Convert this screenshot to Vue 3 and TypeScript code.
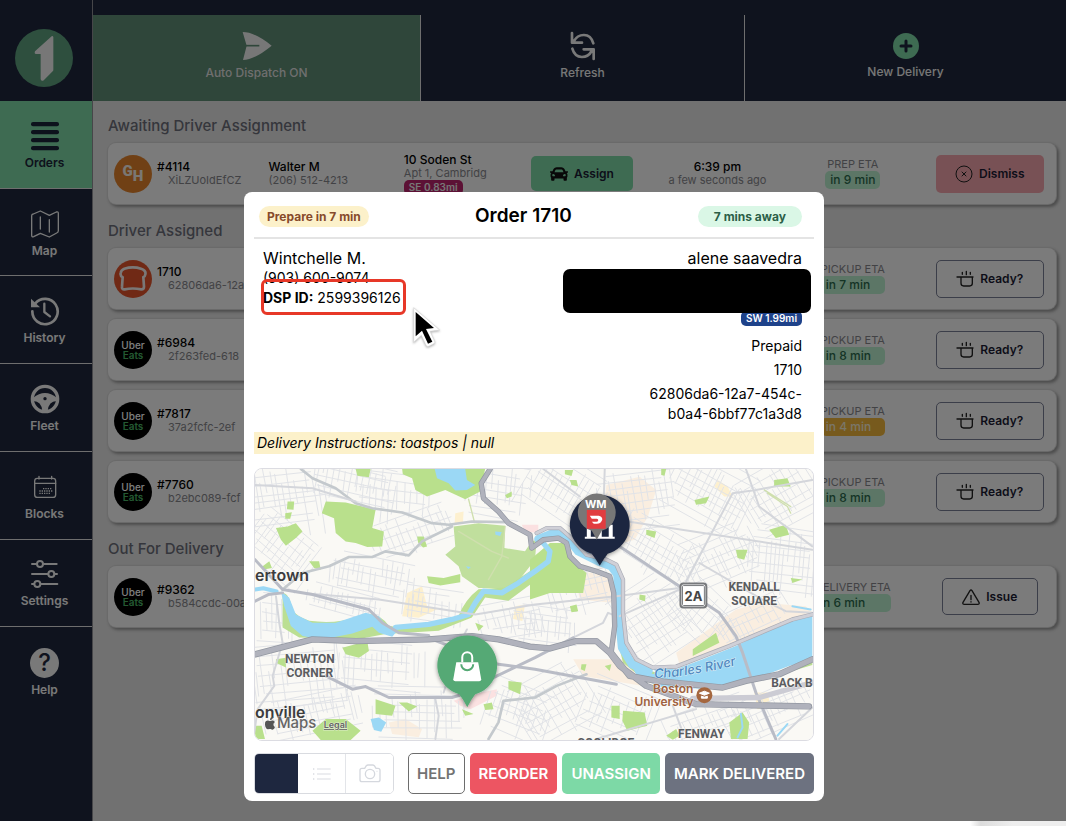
<script setup lang="ts">
interface Order {
  logo: 'gh' | 'toast' | 'uber'
  ref: string
  code: string
  customer?: string
  phone?: string
  street?: string
  unit?: string
  distance?: string
  time?: string
  ago?: string
  etaLabel: string
  eta: string
  late?: boolean
  action: 'dismiss' | 'ready' | 'issue'
}
interface Section {
  title: string
  orders: Order[]
}

const navItems: string[] = ['Orders', 'Map', 'History', 'Fleet', 'Blocks', 'Settings', 'Help']

const sections: Section[] = [
  {
    title: 'Awaiting Driver Assignment',
    orders: [
      {
        logo: 'gh', ref: '#4114', code: 'XiLZUoIdEfCZ', customer: 'Walter M', phone: '(206) 512-4213',
        street: '10 Soden St', unit: 'Apt 1, Cambridg', distance: 'SE 0.83mi',
        time: '6:39 pm', ago: 'a few seconds ago', etaLabel: 'PREP ETA', eta: 'in 9 min', action: 'dismiss',
      },
    ],
  },
  {
    title: 'Driver Assigned',
    orders: [
      { logo: 'toast', ref: '1710', code: '62806da6-12a', etaLabel: 'PICKUP ETA', eta: 'in 7 min', action: 'ready' },
      { logo: 'uber', ref: '#6984', code: '2f263fed-618', etaLabel: 'PICKUP ETA', eta: 'in 8 min', action: 'ready' },
      { logo: 'uber', ref: '#7817', code: '37a2fcfc-2ef', etaLabel: 'PICKUP ETA', eta: 'in 4 min', late: true, action: 'ready' },
      { logo: 'uber', ref: '#7760', code: 'b2ebc089-fcf', etaLabel: 'PICKUP ETA', eta: 'in 8 min', action: 'ready' },
    ],
  },
  {
    title: 'Out For Delivery',
    orders: [
      { logo: 'uber', ref: '#9362', code: 'b584ccdc-00a', etaLabel: 'DELIVERY ETA', eta: 'in 6 min', action: 'issue' },
    ],
  },
]

// Residential street grids: [centre x, centre y, width, height, angle]
type Patch = [number, number, number, number, number]
const patches: Patch[] = [
  [110, 110, 260, 200, -8], [330, 70, 260, 130, 12], [110, 270, 220, 160, 38], [440, 110, 220, 140, 6],
  [500, 220, 260, 120, -20], [380, 350, 260, 120, 10], [760, 90, 200, 160, 8], [300, 430, 240, 80, 14],
  [80, 480, 120, 160, 2], [160, 650, 280, 200, -6], [400, 620, 280, 150, 4], [520, 760, 280, 160, 0],
  [200, 770, 300, 130, -12], [800, 480, 200, 120, -12], [820, 760, 200, 170, 20], [560, 440, 180, 110, 8],
  [960, 90, 240, 180, 32], [1180, 110, 240, 200, -8], [1400, 90, 260, 200, 28], [1610, 110, 240, 200, -30],
  [1240, 280, 260, 160, 30], [1420, 300, 260, 180, -24], [1620, 300, 220, 200, 6], [1230, 480, 220, 240, -34],
  [1370, 460, 200, 160, 40], [1010, 400, 200, 130, -14], [900, 500, 200, 120, 6], [930, 730, 240, 200, -30],
  [1120, 760, 220, 170, 22], [1390, 790, 260, 110, -20], [1580, 770, 280, 150, -24], [1530, 480, 220, 110, -26],
]

let seed = 17
function rand(): number {
  seed = (seed * 16807) % 2147483647
  return seed / 2147483647
}

function streetPath([cx, cy, w, h, deg]: Patch): string {
  const a = (deg * Math.PI) / 180
  const at = (x: number, y: number): string =>
    `${Math.round(cx + x * Math.cos(a) - y * Math.sin(a))} ${Math.round(cy + x * Math.sin(a) + y * Math.cos(a))}`
  let d = ''
  for (let y = -h / 2; y <= h / 2; y += 18 + rand() * 16) {
    const from = -w / 2 + rand() * 40
    d += `M${at(from, y)}L${at(w / 2 - rand() * 50, y + rand() * 8)}`
  }
  for (let x = -w / 2; x <= w / 2; x += 12 + rand() * 12) {
    const from = -h / 2 + rand() * h * 0.4
    d += `M${at(x, from)}L${at(x + rand() * 6, from + h * (0.35 + rand() * 0.4))}`
  }
  return d
}
const streets: string = patches.map(streetPath).join('')
</script>

<template>
  <div class="app">
    <div class="shell">
      <aside class="side">
        <div class="brand">
          <svg width="58" height="58" viewBox="47 87 174 174" aria-hidden="true">
            <circle cx="134" cy="174" r="87" fill="#5c9f7d" />
            <path d="M157 109 107 154q-3 8 3 8h14v76q3 8 10 2l26-26q2-2 2-5V111q-2-4-5-2z" fill="#efefef" />
          </svg>
        </div>
        <nav class="nav">
          <a v-for="item in navItems" :key="item" href="#" class="nav-item" :class="{ active: item === 'Orders' }">
            <svg v-if="item === 'Orders'" width="30" height="30" viewBox="89 363 90 90" fill="#1b2438">
              <rect x="92" y="366" width="84" height="13" rx="6" /><rect x="92" y="390" width="84" height="13" rx="6" />
              <rect x="92" y="414" width="84" height="13" rx="6" /><rect x="92" y="438" width="84" height="13" rx="6" />
            </svg>
            <svg v-else-if="item === 'Map'" width="30" height="30" viewBox="89 625 90 90" class="line" stroke-width="4">
              <path d="M94 645q0-4 5-5l21-9 27 13 21-10q6-2 6 4v52q0 5-5 7l-22 12-27-11-20 10q-6 2-6-4zM120 649v36M147 657v37" />
            </svg>
            <svg v-else-if="item === 'History'" width="30" height="30" viewBox="89 287 90 90" class="line" stroke-width="8">
              <path d="M105 309A38 38 0 1 1 96 333" /><path d="M132 310v25l17 13" stroke-width="7" />
              <path d="M92 295v26h27z" fill="#f2f2f2" stroke="none" />
            </svg>
            <svg v-else-if="item === 'Fleet'" width="30" height="30" viewBox="89 550 90 90" class="line" stroke-width="10">
              <circle cx="134" cy="595" r="38" />
              <path d="M98 592q36-30 72 0l-1 9q-24 0-27 30h-16q-3-30-27-30z" fill="#f2f2f2" stroke="none" />
              <circle cx="134" cy="594" r="5" fill="#1e273c" stroke="none" />
            </svg>
            <svg v-else-if="item === 'Blocks'" width="30" height="30" viewBox="90 815 90 90" class="line" stroke-width="4">
              <rect x="104" y="834" width="63" height="57" rx="8" /><path d="M104 849h63M117 828v8M155 828v8" />
              <path d="M129 865h28M118 872h39M118 879h32" stroke-dasharray="4 3" stroke-width="4" stroke-linecap="butt" />
            </svg>
            <svg v-else-if="item === 'Settings'" width="30" height="30" viewBox="89 296 90 90" class="line" stroke-width="6">
              <path d="M95 311h15M128 311h41M95 341h48M163 341h7M121 371h50M95 371h6" />
              <circle cx="119" cy="311" r="9" /><circle cx="153" cy="341" r="9" /><circle cx="111" cy="371" r="9" />
            </svg>
            <span v-else class="question" aria-hidden="true">?</span>
            <span>{{ item }}</span>
          </a>
        </nav>
      </aside>

      <div class="content">
        <header class="topbar">
          <button type="button" class="top on">
            <svg width="32" height="30" viewBox="721 93 96 90">
              <path d="M726 96q36 0 87 41-51 42-86 43l11-43z" fill="#efefef" />
              <path d="M736 137h40" stroke="#5e8c74" stroke-width="5" />
            </svg>
            <span>Auto Dispatch ON</span>
          </button>
          <button type="button" class="top">
            <svg width="30" height="30" viewBox="622 93 90 90" class="line" stroke-width="8">
              <path d="M634 99v29h30M640 123c12-22 48-28 58 7M699 177v-29h-30M693 153c-12 22-48 28-58-7" />
            </svg>
            <span>Refresh</span>
          </button>
          <button type="button" class="top">
            <svg width="28" height="28" viewBox="0 0 28 28">
              <circle cx="14" cy="14" r="13" fill="#7cd6a4" /><path d="M14 9v10M9 14h10" stroke="#1e273c" stroke-width="3" stroke-linecap="round" />
            </svg>
            <span>New Delivery</span>
          </button>
        </header>

        <main class="board">
          <section v-for="section in sections" :key="section.title">
            <h2>{{ section.title }}</h2>
            <div class="cards">
              <article v-for="order in section.orders" :key="order.ref" class="card">
                <div class="ident">
                  <span class="logo" :class="order.logo">
                    <template v-if="order.logo === 'uber'"><span>Uber</span><b>Eats</b></template>
                    <template v-else-if="order.logo === 'gh'"><b class="g">G</b><b class="h">H</b></template>
                    <svg v-else width="28" height="26" viewBox="0 0 84 78">
                      <path d="M16 8Q42 0 66 8q16 5 13 17-1 7-6 9l2 28q0 8-8 8-26-5-50 0-9 1-8-8l2-28Q3 30 5 21q1-9 11-13z" fill="none" stroke="#f4f0ee" stroke-width="8" />
                    </svg>
                  </span>
                  <div class="pair"><strong>{{ order.ref }}</strong><small class="code">{{ order.code }}</small></div>
                </div>
                <div class="pair inset"><strong>{{ order.customer }}</strong><small>{{ order.phone }}</small></div>
                <div class="pair inset">
                  <strong>{{ order.street }}</strong><small>{{ order.unit }}</small>
                  <span v-if="order.distance" class="dist">{{ order.distance }}</span>
                </div>
                <div class="cell">
                  <button v-if="order.action === 'dismiss'" type="button" class="assign">
                    <svg width="18" height="18" viewBox="0 0 512 512" fill="#111"><path d="M500 176h-60l-17-42C406 92 366 64 320 64H193c-47 0-87 28-104 70l-17 42H12c-8 0-14 7-12 15l6 24c2 5 7 9 12 9h20c-13 12-22 29-22 48v48c0 16 6 31 16 42v54c0 18 14 32 32 32h32c18 0 32-14 32-32v-32h256v32c0 18 14 32 32 32h32c18 0 32-14 32-32v-54c10-11 16-26 16-42v-48c0-19-9-36-22-48h20c5 0 10-4 12-9l6-24c2-8-4-15-12-15zM148 158c7-18 25-30 45-30h127c19 0 37 12 44 30l20 50H128zM96 320c-19 0-32-13-32-32s13-32 32-32 48 29 48 48-29 16-48 16zm320 0c-19 0-48 3-48-16s29-48 48-48 32 13 32 32-13 32-32 32z" /></svg>
                    Assign
                  </button>
                </div>
                <div class="pair center"><strong>{{ order.time }}</strong><small>{{ order.ago }}</small></div>
                <div class="cell">
                  <div class="eta"><small>{{ order.etaLabel }}</small><span :class="{ late: order.late }">{{ order.eta }}</span></div>
                </div>
                <div class="cell last">
                  <button type="button" class="act" :class="order.action">
                    <svg v-if="order.action === 'dismiss'" width="18" height="18" viewBox="0 0 54 54" fill="none" stroke="#222" stroke-width="3">
                      <circle cx="27" cy="27" r="24" /><path d="m21 21 12 12M33 21 21 33" stroke-linecap="round" />
                    </svg>
                    <svg v-else-if="order.action === 'ready'" width="18" height="18" viewBox="441 120 54 54" fill="none" stroke="#222" stroke-width="4" stroke-linecap="round">
                      <path d="M444 141h48M456 142v18q0 8 8 8h18q8 0 8-8v-18M460 127v6M472 124v10M484 127v6" />
                    </svg>
                    <svg v-else width="18" height="18" viewBox="0 0 54 54" fill="none" stroke="#222" stroke-width="4" stroke-linecap="round" stroke-linejoin="round">
                      <path d="M24 8q3-4 6 0l21 35q2 6-4 6H7q-6 0-4-6zM27 22v13M27 41v1" />
                    </svg>
                    {{ order.action === 'dismiss' ? 'Dismiss' : order.action === 'ready' ? 'Ready?' : 'Issue' }}
                  </button>
                </div>
              </article>
            </div>
          </section>
        </main>
      </div>

      <div class="overlay">
        <div class="modal" role="dialog" aria-modal="true" aria-labelledby="order-title">
          <div class="m-head">
            <div><span class="pill amber">Prepare in 7 min</span></div>
            <h1 id="order-title">Order 1710</h1>
            <div class="end"><span class="pill mint">7 mins away</span></div>
          </div>

          <div class="m-body">
            <div class="left">
              <p class="name">Wintchelle M.</p>
              <p>(903) 600-9074</p>
              <p class="dsp"><b>DSP ID:</b> 2599396126</p>
              <svg class="cursor" width="30" height="44" viewBox="0 0 90 132" aria-hidden="true">
                <path d="M8 5v104l23-21 14 30q3 5 8 3l16-8q4-3 2-7L57 76l29-4z" fill="#fff" stroke="#d5d5d5" stroke-width="2" />
                <path d="M14 18v73l19-17 18 39 13-6-19-38 24-3z" fill="#000" />
              </svg>
            </div>
            <div class="right">
              <p class="name">alene saavedra</p>
              <div class="redacted"></div>
              <span class="dist blue">SW 1.99mi</span>
              <p class="first">Prepaid</p>
              <p>1710</p>
              <p class="uuid">62806da6-12a7-454c-b0a4-6bbf77c1a3d8</p>
            </div>
          </div>

          <p class="notes">Delivery Instructions: toastpos | null</p>

          <div class="map">
            <svg viewBox="0 0 560 272" role="img" aria-label="Map of pickup and drop-off">
              <defs>
                <filter id="pin-shadow" x="-30%" y="-30%" width="160%" height="160%">
                  <feDropShadow dx="0" dy="1" stdDeviation="2" flood-opacity=".45" />
                </filter>
              </defs>
              <rect width="560" height="272" fill="#faf9f5" />
              <g transform="scale(.33333) translate(-27 -27)" fill="none" stroke-linejoin="round" stroke-linecap="round">
                <g fill="#faeee0">
                  <path d="M1085 75l100-25 50 40-25 80-40 70-55 15-45-60zM985 330l110 20 5 80-95-10zM1295 580l180-130 80-20 130 10 20 20-250 95-150 60zM985 600l200 0 10 80-180-30zM430 790l50-10 50 30-10 25-80-10z" />
                  <path d="M485 400l45-20 15 60 30 10-55 25-50-5zM810 440l30-5-8 50-28-6zM1420 60l30 20 15 30-25 0-30-30zM1530 700l40 0 10 45-40 5zM630 160l25-5-2 35-25 0z" fill="#fdf0cf" />
                  <path d="M625 725l60-20 70-15 0 20-80 40-30-10zM830 195l50 0 0 25-40-5z" fill="#fbe1e1" />
                </g>
                <path :d="streets" stroke="#e1e3e7" stroke-width="3" />
                <g fill="#b9e08c">
                  <path d="M240 125l60 3 50 12 40 10-10 55 35 10-5 45-45 2-35-12-30-5-30-25-5-45-37-15zM90 205l35-5 25-10 20 25-20 20-30 23-15-18zM125 125l20 0-2 25-20-2zM118 160l20-3-5 20-15 0zM330 27l45 0-5 25-35-5z" />
                  <path d="M470 27h250l-15 68-45 23-60-28-55 20-35-20-10-35-28-12zM515 230l20 0 10 30-12 3-15-15zM780 105l20-10 0 15-15 5z" />
                  <path d="M625 200l75-10 80 8-2 67 62 10 20-30 15-5-5 60-70 90-60-5-40 0-50-35-10-30-40-35 30-25z" fill="#c0df9d" />
                  <path d="M545 350l50 5 50-12 0 25-60 10-35-8zM290 565l75-20 5 30-30 20-40-10zM200 815l40-35 60 0 45 35-30 28-90 0zM390 720l60 20-10 30-50-5zM790 665l40 5-5 35-35-15zM715 735l25-5 5 20-25 3zM460 730l25 0 30 12-25 15zM650 750l35 15-25 5zM690 490l25 10-15 15zM90 600l30-5 0 30-30-15zM50 320l20-15 8 20-28 5zM190 305l30 0 5 25-20-5zM27 800l20 0 10 40-30 0z" />
                  <path d="M110 400q20 0 30 50 10 20 50 34 80 10 140-10 60-30 100 25 80 20 210-30 20-50 60-80l80-5 90-60 0 40-80 60-70-10-40 60-100 40-160 10-80 15-180-5-50-30z" fill="#bbdf93" />
                  <path d="M855 300l60-50 50 0 25 60 35 30-10 60-100 0-60 20zM1345 570l70-50 10 30-80 40zM1455 790l40-30 20 30-5 50-50 0zM1135 755l65 5 8 40-60 15-15-30zM1575 210l50-15 10 30-40 10zM1475 270l35 0-10 30-20-5zM1350 120l45-10-10 20-30 5zM1590 60l40-5 10 25-50 0zM975 60l20 0 5 20-20-5zM960 30l25 0-5 18-20-5zM1205 210l30 5-5 20-25-10zM1250 27l15 0-5 20-10-2zM1185 405l18 3-2 17-17-5zM975 440l20-5 5 20-20 3zM1010 615l15 0-5 20-12-5zM1080 620l20-5-5 20zM1265 830l30-20 10 20-20 12zM1640 355l35 5-30 10zM1100 740l25 0 0 40-25-5z" />
                  <path d="M1125 570l40 30 50 35 50 10 0 12-80-7-50-40z" fill="#bbdf93" />
                </g>
                <g stroke="#cfdfae" stroke-width="4"><path d="M670 118l18 70M780 200l-10 90-40 70M640 215l100 60 50 20M1560 90l80 50M1570 100l60 40 10 20" /></g>
                <g fill="#9bd8f5">
                  <path d="M568 27h92l5 33 25 15-25 15-35 2-20-22-35-15zM375 780l25-5 22 15-15 28-22-5zM750 215l20 2-5 12-14-4zM662 320l15 2-8 6z" />
                  <path d="M105 395l25 20 20 50 50 25 70 0 90-30 40 10 20 25 35 20-15 17-40-12-20-18-60 20-90 18-60-10-35-30-20-60z" />
                  <path d="M1155 610l40 30 40 5-10-25 70 10 80-30 100-40 120-60 110-40v140l-70 20-80 30-120 40-180-5-75-30z" />
                </g>
                <path d="M1600 645l60-30 45-12v14l-60 18z" fill="#bbdf93" />
                <g stroke="#9bd8f5">
                  <path d="M27 390l25-4 40 10" stroke-width="12" />
                  <path d="M450 504l100-9 70-15 50-15 20-35 25-35 55 5 50-30 50-35 40-30 5-30-20-25" stroke-width="16" />
                  <path d="M880 238l45-18 40 10 35 45 60 30 40 15 18 25 4 120 10 100 30 50 50 20" stroke-width="25" />
                  <path d="M1490 765l5 40-15 30M1600 830l30-35M1645 440l55 10" stroke-width="6" />
                </g>
                <g stroke="#c4c9cd" stroke-width="8">
                  <path d="M165 27l35 28 70 30 60 45 50 15 90 13 90 32 50 5 70-10 100 2M110 390l60-50 80-20 60-28 70 0 40-17 70 12 40-42 90-45M730 840l30-50 15-65 95-10 65-35 90-35" />
                </g>
                <g stroke="#d4d6db" stroke-width="6">
                  <path d="M27 75l173 10 130 40M165 400l235 20 290 45 180-30 245-25 190-25M90 410l10 80 10 60-30 100 5 30-50 70-10 70M570 720l10 50-10 70M665 510l-30 60-40 130" />
                  <path d="M1080 27l-3 90M895 27l110 83M1115 180l590 90M1505 27l40 113 160 120M1705 60l-170 30-70 10-140 265M1125 470l180-80M985 535l90-45 15-30 25 10M1365 310l190 110 70 35 80 5M1285 740l30 80M1055 840l300-90M1705 745l-100 95" />
                </g>
                <g stroke="#b9bcc6">
                  <path d="M27 300l83 90 90 15 170 45 40 40 50 30 90 8M240 650l80 40 40-8 70 33 190 0 50-15M560 540l200 75 110 15 245 45M745 655l125-60 115-60M1125 260l180 120 120 80 50 70 20 50 40 120 60 140M27 425l40-20 43-5" stroke-width="9" />
                  <path d="M875 220l30-15 40 0 40 35 40 45 60 15 30 15 20 45 0 100 10 90 30 50 50 25 70-3 160-62 190-80 60-15" stroke-width="13" stroke="#a9abb5" />
                  <path d="M875 220l30-15 40 0 40 35 40 45 60 15 30 15 20 45 0 100 10 90 30 50 50 25 70-3 160-62 190-80 60-15" stroke-width="9" stroke="#d0d0d7" />
                  <path d="M1345 718l200-3 160-45" stroke-width="16" stroke="#ccccd4" />
                </g>
                <g stroke="#9297a1" stroke-width="19">
                  <path d="M735 27l-27 43 7 45 45 40 30 35 65 35 5 40 35-25 45-5 25 15 10 40 30 30 50 15 40 15 12 50 3 100-10 75" stroke-width="16" />
                  <path d="M27 585l173-45 130 5 220-5 130-10 80 10 95 22 60 5 80-22 60 0 40 35 30 40 80 60 150 55 340 7M1095 575l60 75 80 15 200 20 70-20 100-20 100-45" />
                </g>
                <g stroke="#b0b2bc" stroke-width="15">
                  <path d="M735 27l-27 43 7 45 45 40 30 35 65 35 5 40 35-25 45-5 25 15 10 40 30 30 50 15 40 15 12 50 3 100-10 75" stroke-width="12" />
                  <path d="M27 585l173-45 130 5 220-5 130-10 80 10 95 22 60 5 80-22 60 0 40 35 30 40 80 60 150 55 340 7M1095 575l60 75 80 15 200 20 70-20 100-20 100-45" />
                </g>
              </g>

              <g class="labels">
                <g font-size="16" font-weight="600" fill="#3c3c3e"><text x="0" y="112">ertown</text><text x="0" y="250">onville</text></g>
                <g class="narrow" text-anchor="middle">
                  <text x="55" y="195">NEWTON</text><text x="55" y="209">CORNER</text>
                  <text x="501" y="122">KENDALL</text><text x="501" y="136">SQUARE</text>
                  <text x="448" y="270">FENWAY</text><text x="352" y="279">COOLIDGE</text>
                  <text x="518" y="219" text-anchor="start">BACK B</text>
                </g>
                <path id="river-line" d="M401 210Q440 208 490 195" fill="none" />
                <text font-size="13" font-style="italic" font-weight="500" fill="#4f88c0"><textPath href="#river-line">Charles River</textPath></text>
                <g font-size="12" font-weight="600" fill="#a0623f" text-anchor="end"><text x="440" y="225">Boston</text><text x="440" y="238">University</text></g>
                <circle cx="451" cy="227" r="8" fill="#a5673f" /><path d="M446 225l5-2 5 2-5 2zM448 228l3 1 3-1v2h-6z" fill="#fff" stroke="#fff" />
                <rect x="427" y="115" width="26" height="24" rx="3" fill="#fff" stroke="#77797c" stroke-width="2" />
                <rect x="429" y="117" width="22" height="20" rx="1" fill="none" stroke="#77797c" />
                <text x="440" y="132" text-anchor="middle" font-size="13" font-weight="700" fill="#444">2A</text>
                <path d="M15 253c2-1 4-1 5 1-2 1-2 4 0 5-1 3-3 3-4 2h-2c-2 1-4-1-4-5 0-4 3-4 5-3zM15 252c0-2 1-3 3-3 0 2-1 3-3 3z" fill="#555" />
                <text x="22" y="260" font-size="15" font-weight="500" fill="#666">Maps</text>
                <text x="69" y="260" font-size="9" font-weight="600" fill="#666" text-decoration="underline">Legal</text>
              </g>

              <g filter="url(#pin-shadow)">
                <path d="M205 226q4 5 8 13 4-8 8-13A30 30 0 1 0 205 226z" fill="#54a974" />
              </g>
              <path d="M202 194h22l3 17q0 2-2 2h-24q-2 0-2-2z" fill="#fff" />
              <path d="M208 194v-5a5 5 0 0 1 10 0v5" fill="none" stroke="#fff" stroke-width="2" />
              <path d="M207 196a6 6 0 0 0 12 0" fill="none" stroke="#54a974" stroke-width="2" />
              <g filter="url(#pin-shadow)">
                <path d="M338 85q4 5 8 12 4-7 8-12A30 30 0 1 0 338 85z" fill="#1e273f" />
              </g>
              <path d="M331 69h30" stroke="#fff" stroke-width="2" /><path d="M335 69V56M346 69V56M357 69V56" stroke="#fff" stroke-width="4" fill="none" />
              <path d="M338 62l5 9 5-9A19 19 0 1 0 338 62z" fill="#777" />
              <text x="342" y="39" text-anchor="middle" font-size="11" font-weight="700" fill="#fff">WM</text>
              <rect x="333" y="41" width="19" height="19" fill="#e13d40" />
              <path d="M336 47h9c4 1 4 4 3 5-1 2-2 3-5 3h-3l-2-2h5c2 0 2-3 0-3h-5z" fill="#fff" />
            </svg>
          </div>

          <div class="m-foot">
            <div class="tabs">
              <button type="button" class="selected" aria-label="Map view"></button>
              <button type="button" aria-label="Items">
                <svg width="20" height="16" viewBox="0 0 60 48" fill="none" stroke="#d9dbe1" stroke-width="3"><path d="M15 9h41M15 24h41M15 39h41" /><path d="M3 9h4M3 24h4M3 39h4" stroke-width="5" /></svg>
              </button>
              <button type="button" aria-label="Photos">
                <svg width="22" height="20" viewBox="0 0 66 60" fill="none" stroke="#d5d8de" stroke-width="4" stroke-linejoin="round"><path d="M3 19q0-6 6-6h8l5-8q2-2 5-2h14q3 0 5 2l5 8h6q6 0 6 6v28q0 6-6 6H9q-6 0-6-6z" /><circle cx="33" cy="30" r="14" /><path d="M53 22h2" /></svg>
              </button>
            </div>
            <div class="actions">
              <button type="button" class="b help">HELP</button>
              <button type="button" class="b red">REORDER</button>
              <button type="button" class="b green">UNASSIGN</button>
              <button type="button" class="b slate">MARK DELIVERED</button>
            </div>
          </div>
        </div>
      </div>
    </div>
    <div class="strip"></div>
  </div>
</template>

<style>
body { margin: 0; background: #fff; }
</style>

<style scoped>
* { box-sizing: border-box; }
.app { min-height: 100vh; display: flex; flex-direction: column; font-family: Inter, "Liberation Sans", sans-serif; color: #000; }
.shell { flex: 1; display: flex; position: relative; background: #e2e2e2; }
.strip { height: 5px; background: linear-gradient(90deg, #fff 91%, #dcdcdc 92%, #eee 95%); }
h1, h2, p { margin: 0; font-weight: 400; }
button { font: inherit; color: inherit; cursor: pointer; padding: 0; }
svg { display: block; flex: none; }
.line { fill: none; stroke: #f2f2f2; stroke-linecap: round; stroke-linejoin: round; }

.side { width: 93px; flex: none; background: #1e273c; border-right: 1px solid #8d8d92; color: #f2f2f2; }
.brand { height: 101px; padding: 29px 0 0 15px; }
.nav { display: grid; grid-auto-rows: 1fr; height: 614px; }
.nav-item { display: flex; flex-direction: column; align-items: center; justify-content: center; gap: 4px; padding: 3px 3px 0 0; border-bottom: 1px solid #dcdcdc; color: inherit; text-decoration: none; font-size: 12px; line-height: 16px; font-weight: 600; }
.nav-item:last-child { border-bottom: 0; }
.nav-item.active { background: #7cd6a4; color: #1b2438; }
.question { width: 29px; height: 30px; border-radius: 50%; background: #f2f2f2; color: #1e273c; font-size: 24px; line-height: 30px; font-weight: 500; text-align: center; }

.content { flex: 1; min-width: 0; }
.topbar { display: grid; grid-template-columns: 328fr 324fr 321fr; background: #1e273c; padding-top: 15px; height: 101px; }
.top { display: flex; flex-direction: column; align-items: center; justify-content: center; gap: 4px; padding-bottom: 5px; border: 0; border-right: 1px solid #dcdcdc; background: none; color: #efefef; font-size: 12px; line-height: 16px; font-weight: 500; }
.top:last-child { border-right: 0; }
.top.on { background: #5e8c74; color: #dedede; }

.board { padding: 16px 10px 0 15px; }
h2 { font-size: 15px; line-height: 18px; font-weight: 500; color: #6b6d78; margin-bottom: 8px; }
section + section { margin-top: 18px; }
.cards { display: grid; gap: 10px; }
.card { display: grid; grid-template-columns: repeat(7, minmax(0, 1fr)); align-items: center; height: 61px; background: #f6f6f6; border-radius: 8px; box-shadow: 0 0 0 1px #d4d4d4, 2px 2px 3px 1px #999; }
.ident { display: flex; align-items: center; gap: 5px; padding-left: 6px; white-space: nowrap; }
.logo { flex: none; width: 38px; height: 38px; border-radius: 50%; display: flex; align-items: center; justify-content: center; color: #fff; }
.uber { background: #000; flex-direction: column; font-size: 10px; line-height: 10px; font-weight: 500; }
.uber b { color: #48b365; font-weight: 600; }
.gh { background: #e0812b; font-size: 15px; line-height: 18px; color: #f4eee6; align-items: flex-start; padding-top: 7px; }
.gh .h { margin-top: 5px; }
.gh b { font-family: Roboto, sans-serif; font-weight: 900; }
.toast { background: #e0532b; }
.pair { display: flex; flex-direction: column; align-items: flex-start; }
.pair strong { font-size: 12px; line-height: 14px; font-weight: 500; color: #000; }
.pair small { font-size: 11px; line-height: 13px; color: #85858a; }
.pair .code { padding-left: 11px; }
.pair.inset { padding-left: 25px; white-space: nowrap; }
.pair.center { align-items: center; }
.dist { font-size: 10px; line-height: 15px; font-weight: 600; border-radius: 5px; padding: 0 5px; background: #b9236a; color: #eee; }
.cell { display: flex; justify-content: center; }
.cell.last { padding-left: 3px; }
.assign, .act { display: flex; align-items: center; justify-content: center; gap: 6px; font-size: 12px; font-weight: 600; border-radius: 5px; color: #1b1b33; }
.assign { width: 102px; height: 35px; border: 0; background: #7cd6a4; }
.act { width: 108px; height: 38px; border: 1px solid #777c92; background: none; }
.act.dismiss { border: 0; background: #f0a3aa; }
.act.issue { width: 96px; height: 37px; }
.eta { display: flex; flex-direction: column; align-items: stretch; }
.eta small { font-size: 11px; line-height: 13px; color: #85858a; text-align: center; }
.eta span { font-size: 12px; line-height: 18px; font-weight: 500; border-radius: 5px; padding: 0 5px; background: #b8eccd; color: #2b684b; }
.eta span.late { background: #efb53a; color: #f5ecd2; }

.overlay { position: absolute; inset: 0; background: rgba(0, 0, 0, .5); display: flex; align-items: flex-start; justify-content: center; padding: 192px 0 0 2px; }
.modal { width: 580px; max-width: 100%; background: #fff; border-radius: 8px; padding: 0 10px 7px; }
.m-head { display: grid; grid-template-columns: 216px auto 1fr; align-items: center; height: 47px; border-bottom: 2px solid #e4e4e4; padding: 2px 12px 0 5px; }
.m-head h1 { font-size: 19px; line-height: 24px; font-weight: 600; }
.end { text-align: right; }
.pill { display: inline-block; font-size: 12px; line-height: 21px; font-weight: 700; border-radius: 11px; padding: 0 8px; }
.amber { background: #fcf1ca; color: #874a2b; }
.mint { background: #daf7e6; color: #2c5f48; padding: 0 16px; }
.m-body { display: flex; justify-content: space-between; padding: 9px 12px 8px 9px; font-size: 14px; line-height: 20px; }
.name { font-size: 16px; }
.left { position: relative; z-index: 0; }
.dsp { position: relative; line-height: 19px; }
.dsp::before, .dsp::after { content: ""; box-sizing: border-box; position: absolute; top: -9px; left: -2px; width: 145px; height: 36px; border-radius: 6px; }
.dsp::before { background: #fff; z-index: -1; }
.dsp::after { border: 3px solid #e73828; }
.cursor { position: absolute; left: 148px; top: 58px; filter: drop-shadow(0 1px 1px rgba(0, 0, 0, .3)); }
.right { display: flex; flex-direction: column; align-items: flex-end; gap: 4px; text-align: right; }
.redacted { width: 248px; height: 44px; margin: -3px -9px 0 0; background: #000; border-radius: 7px; position: relative; z-index: 1; }
.blue { background: #1e428a; color: #fff; margin-top: -6px; }
.first { margin-top: 6px; }
.uuid { max-width: 160px; }
.notes { background: #fcf1ca; font-size: 14px; line-height: 22px; font-style: italic; padding-left: 3px; }
.map { margin-top: 14px; border: 1px solid #dcdce2; border-radius: 8px; overflow: hidden; }
.map svg { width: 100%; height: auto; }
.labels text { paint-order: stroke; stroke: #faf9f5; stroke-width: 1px; stroke-opacity: .7; }
.narrow { font-family: Roboto, sans-serif; font-size: 12px; font-weight: 700; fill: #5a5c60; }
.m-foot { display: flex; justify-content: space-between; margin-top: 12px; }
.tabs { display: grid; grid-template-columns: 43px 47px 48px; height: 41px; border: 1px solid #d9dbe0; border-radius: 5px; overflow: hidden; }
.tabs button { display: flex; align-items: center; justify-content: center; border: 0; background: #fff; }
.tabs button:last-child { border-left: 1px solid #e3e5e9; }
.tabs .selected { background: #1e273f; }
.actions { display: flex; gap: 5px; }
.b { height: 41px; padding: 0 8px; border: 1px solid transparent; border-radius: 5px; color: #fff; font-size: 15px; font-weight: 600; }
.help { background: #fff; border-color: #6d6d6d; color: #737373; }
.red { background: #ed5562; }
.green { background: #7dd9a6; }
.slate { background: #6d7280; }
</style>
